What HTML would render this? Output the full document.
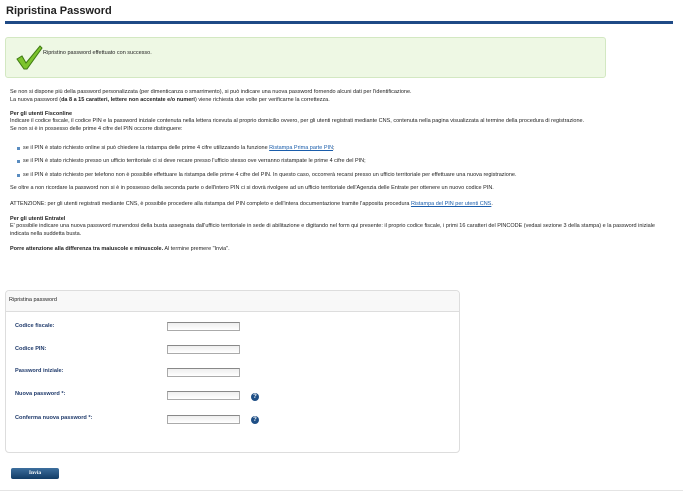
<!DOCTYPE html>
<html><head><meta charset="utf-8"><style>
*{margin:0;padding:0;box-sizing:border-box}
body{width:683px;height:493px;background:#fff;font-family:"Liberation Sans",sans-serif;color:#222;position:relative;overflow:hidden}
.a{position:absolute;white-space:nowrap;font-size:5.5px;line-height:7px}
a{color:#1a5dab;text-decoration:underline}
.lb{color:#1f3a6b;font-weight:bold;font-size:5.6px}
.in{position:absolute;width:73px;height:9px;border:1px solid #aaa;border-top-color:#888;background:linear-gradient(#eee,#fff)}
.q{position:absolute;width:8px;height:8px;border-radius:50%;background:#1f4f86;color:#fff;font-size:6px;font-weight:bold;text-align:center;line-height:8px}
.b{display:inline-block;width:3px;height:3px;background:#5a8cc0;vertical-align:-1px}
</style></head><body>
<div class="a" style="left:6px;top:5px;font-size:11px;line-height:13px;font-weight:bold;color:#222">Ripristina Password</div>
<div style="position:absolute;left:5px;top:21px;width:668px;height:3px;background:#1f4a86"></div>
<div style="position:absolute;left:5px;top:37px;width:601px;height:41px;background:#eef8e4;border:1px solid #d3e8c2;border-radius:3px"></div>
<svg style="position:absolute;left:15px;top:44px" width="28" height="27" viewBox="0 0 28 27"><path d="M2 15 L7 12 L11 19 L25 2 L27 4 L12 25 L9 25 Z" fill="#7cc42c" stroke="#3f7a12" stroke-width="1"/></svg>
<div class="a" style="left:43px;top:50px">Ripristino password effettuato con successo.</div>
<div class="a" style="left:10px;top:89px">Se non si dispone più della password personalizzata (per dimenticanza o smarrimento), si può indicare una nuova password fornendo alcuni dati per l'identificazione.</div>
<div class="a" style="left:10px;top:97px">La nuova password (<b>da 8 a 15 caratteri, lettere non accentate e/o numeri</b>) viene richiesta due volte per verificarne la correttezza.</div>
<div class="a" style="left:10px;top:111px;font-weight:bold">Per gli utenti Fisconline</div>
<div class="a" style="left:10px;top:118px">Indicare il codice fiscale, il codice PIN e la password iniziale contenuta nella lettera ricevuta al proprio domicilio ovvero, per gli utenti registrati mediante CNS, contenuta nella pagina visualizzata al termine della procedura di registrazione.</div>
<div class="a" style="left:10px;top:126px">Se non si è in possesso delle prime 4 cifre del PIN occorre distinguere:</div>
<div class="a" style="left:17px;top:145px"><span class="b"></span> &nbsp;se il PIN è stato richiesto online si può chiedere la ristampa delle prime 4 cifre utilizzando la funzione <a>Ristampa Prima parte PIN</a>;</div>
<div class="a" style="left:17px;top:158px"><span class="b"></span> &nbsp;se il PIN è stato richiesto presso un ufficio territoriale ci si deve recare presso l'ufficio stesso ove verranno ristampate le prime 4 cifre del PIN;</div>
<div class="a" style="left:17px;top:172px"><span class="b"></span> &nbsp;se il PIN è stato richiesto per telefono non è possibile effettuare la ristampa delle prime 4 cifre del PIN. In questo caso, occorrerà recarsi presso un ufficio territoriale per effettuare una nuova registrazione.</div>
<div class="a" style="left:10px;top:185px">Se oltre a non ricordare la password non si è in possesso della seconda parte o dell'intero PIN ci si dovrà rivolgere ad un ufficio territoriale dell'Agenzia delle Entrate per ottenere un nuovo codice PIN.</div>
<div class="a" style="left:10px;top:201px">ATTENZIONE: per gli utenti registrati mediante CNS, è possibile procedere alla ristampa del PIN completo e dell'intera documentazione tramite l'apposita procedura <a>Ristampa del PIN per utenti CNS</a>.</div>
<div class="a" style="left:10px;top:216px;font-weight:bold">Per gli utenti Entratel</div>
<div class="a" style="left:10px;top:223px">E' possibile indicare una nuova password munendosi della busta assegnata dall'ufficio territoriale in sede di abilitazione e digitando nel form qui presente: il proprio codice fiscale, i primi 16 caratteri del PINCODE (vedasi sezione 3 della stampa) e la password iniziale</div>
<div class="a" style="left:10px;top:231px">indicata nella suddetta busta.</div>
<div class="a" style="left:10px;top:246px"><b>Porre attenzione alla differenza tra maiuscole e minuscole.</b> Al termine premere "Invia".</div>
<div style="position:absolute;left:5px;top:290px;width:455px;height:163px;border:1px solid #ddd;border-radius:4px;overflow:hidden">
<div style="height:21px;background:#f8f8f8;border-bottom:1px solid #ddd"></div></div>
<div class="a" style="left:9px;top:297px">Ripristina password</div>
<div class="a lb" style="left:15px;top:323px">Codice fiscale:</div>
<div class="a lb" style="left:15px;top:346px">Codice PIN:</div>
<div class="a lb" style="left:15px;top:368px">Password iniziale:</div>
<div class="a lb" style="left:15px;top:391px">Nuova password *:</div>
<div class="a lb" style="left:15px;top:415px">Conferma nuova password *:</div>
<div class="in" style="left:167px;top:322px"></div>
<div class="in" style="left:167px;top:345px"></div>
<div class="in" style="left:167px;top:368px"></div>
<div class="in" style="left:167px;top:391px"></div>
<div class="in" style="left:167px;top:415px"></div>
<div class="q" style="left:251px;top:393px">?</div>
<div class="q" style="left:251px;top:416px">?</div>
<div style="position:absolute;left:11px;top:468px;width:48px;height:11px;border-radius:2px;background:linear-gradient(#3d6f9e,#123c66);color:#fff;font-size:5.5px;font-weight:bold;text-align:center;line-height:11px;font-family:'Liberation Serif',serif">Invia</div>
<div style="position:absolute;left:0;top:490px;width:683px;height:1px;background:#e4e4e4"></div>
</body></html>
